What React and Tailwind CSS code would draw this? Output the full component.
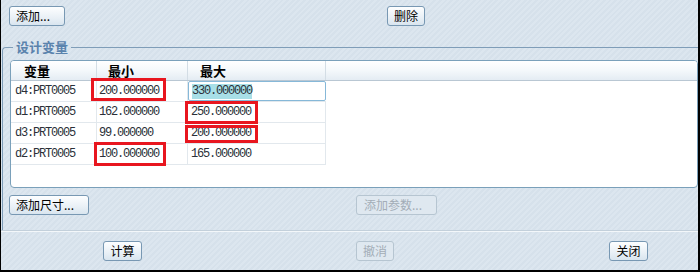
const cjk = "font-['Noto_Sans_CJK_SC','Noto_Sans',sans-serif]";
const mono = "font-['Liberation_Mono',monospace] text-[12px] tracking-[-1.2px] text-[#2a2f38]";

function Btn({ children, className = "", disabled = false }) {
  return (
    <div
      className={
        "flex h-[20px] items-center justify-center rounded-[3px] border text-[12px] leading-none " +
        (disabled
          ? "border-[#b6c5d1] text-[#a3adb7] bg-[#dfe8f0] "
          : "border-[#7898b3] text-black bg-[linear-gradient(#fdfeff,#e9f0f6_60%,#d9e5ef)] ") +
        className
      }
    >
      {children}
    </div>
  );
}

const rows = [
  ["d4:PRT0005", "200.000000", "330.000000"],
  ["d1:PRT0005", "162.000000", "250.000000"],
  ["d3:PRT0005", "99.000000", "200.000000"],
  ["d2:PRT0005", "100.000000", "165.000000"],
];

export default function App() {
  return (
    <div
      className={
        "relative w-[700px] h-[272px] overflow-hidden border-l border-r-2 border-b-2 border-black bg-[#dbe5ee] bg-[repeating-linear-gradient(135deg,#dce6ef_0px,#dce6ef_2px,#d6e1eb_2px,#d6e1eb_4px)] " +
        cjk
      }
    >
      {/* top buttons */}
      <div className="flex h-[40px] pt-[6px] pl-[8px]">
        <Btn className="w-[56px] justify-start pl-[6px]">添加...</Btn>
        <Btn className="ml-[322px] w-[38px]">删除</Btn>
      </div>

      {/* group box */}
      <fieldset className="ml-px h-[190px] rounded-tl-[4px] border-t border-l border-[#7f9db8] pl-[7px] pt-[6px]">
        <legend className="ml-[3px] px-[3px] text-[13px] font-bold leading-[14px] text-[#5a83ad]">
          设计变量
        </legend>

        {/* table */}
        <div className="h-[128px] w-full overflow-hidden rounded-[4px] border border-[#7aa0ba] bg-white">
          {/* header */}
          <div className="flex h-[20px] border-b border-[#b9c7d3] bg-[linear-gradient(#ffffff,#f4f8fb_50%,#e4ecf3)] text-[13px] font-bold leading-[19px] text-black">
            <div className="w-[86px] border-r border-[#d3dde5] pl-[13px]">变量</div>
            <div className="w-[91px] border-r border-[#d3dde5] pl-[11px]">最小</div>
            <div className="w-[138px] border-r border-[#d3dde5] pl-[12px]">最大</div>
            <div className="flex-1" />
          </div>
          {/* rows */}
          {rows.map((r, i) => (
            <div key={i} className="flex h-[21px] w-[315px] border-b border-[#e2e8ed]">
              <div className={"w-[86px] border-r border-[#e2e8ed] pl-[4px] leading-[20px] " + mono}>{r[0]}</div>
              <div className={"w-[91px] border-r border-[#e2e8ed] pl-[2px] leading-[20px] " + mono}>{r[1]}</div>
              {i === 0 ? (
                <div className="w-[138px]">
                  <div className="flex h-[20px] w-[138px] items-center rounded-[2px] border border-[#86b8d8] bg-white pl-[3px]">
                    <span className={"bg-[#a8dfe7] leading-[15px] " + mono}>{r[2]}</span>
                  </div>
                </div>
              ) : (
                <div className={"w-[138px] border-r border-[#e2e8ed] pl-[3px] leading-[20px] " + mono}>{r[2]}</div>
              )}
            </div>
          ))}
        </div>

        {/* add buttons */}
        <div className="mt-[7px] flex -ml-px">
          <Btn className="w-[80px] justify-start pl-[6px]">添加尺寸...</Btn>
          <Btn disabled className="ml-[267px] w-[81px] justify-start pl-[7px]">添加参数...</Btn>
        </div>
      </fieldset>

      {/* separator */}
      <div className="h-[2px] border-t border-[#c3d0db] bg-[#f3f7fa]" />

      {/* bottom buttons */}
      <div className="flex pt-[9px]">
        <Btn className="ml-[102px] w-[39px]">计算</Btn>
        <Btn disabled className="ml-[214px] w-[38px]">撤消</Btn>
        <Btn className="ml-[215px] w-[39px]">关闭</Btn>
      </div>

      {/* red annotation boxes */}
      <div className="absolute left-[90px] top-[78px] h-[23px] w-[75px] border-[3px] border-[#e8161f]" />
      <div className="absolute left-[184px] top-[101px] h-[23px] w-[73px] border-[3px] border-[#e8161f]" />
      <div className="absolute left-[184px] top-[125px] h-[18px] w-[73px] border-[3px] border-[#e8161f]" />
      <div className="absolute left-[93px] top-[142px] h-[24px] w-[72px] border-[3px] border-[#e8161f]" />
    </div>
  );
}
